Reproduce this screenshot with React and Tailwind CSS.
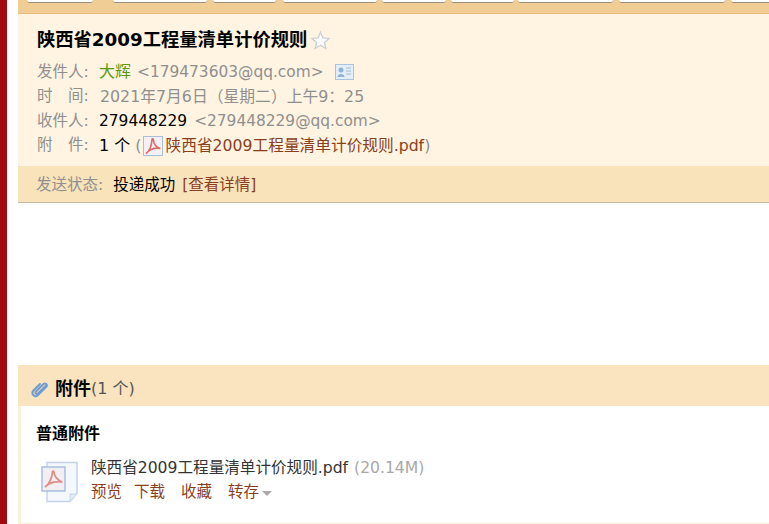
import React from 'react';

const font = { fontFamily: '"DejaVu Sans", "Noto Sans CJK SC", sans-serif' };

function PdfGlyph({ className }) {
  return (
    <svg viewBox="0 0 20 20" className={className}>
      <rect x="0.5" y="0.5" width="19" height="19" fill="#f4f1f4" stroke="#a9bedb" />
      <path d="M3 17.500C6 15.500 8.500 10 9 3.500c.2-1 1.300-1 1.400.3.200 4 2.800 7.500 7 8.700-3.500-.7-9.500-.4-14.400 5z" fill="none" stroke="#dd6a64" strokeWidth="1.600" />
    </svg>
  );
}

function BigPdfIcon() {
  return (
    <svg viewBox="0 0 38 42" className="h-[42px] w-[38px] shrink-0">
      <path d="M6 1.500h30v31l-7 8H6z" fill="#f4f8fd" stroke="#c2d3ea" strokeWidth="1.500" />
      <path d="M29 40v-7h7" fill="#e2eaf5" stroke="#c2d3ea" />
      <rect x="1" y="6" width="23" height="24" fill="#f3eef1" stroke="#a9bedb" strokeWidth="1.500" />
      <path d="M4 26C8 23.500 11 17 11.500 11c.2-1 1.300-1 1.400 0 .2 4 3.500 8.500 8.500 10-4.500-1-12.400-.5-17.400 5z" fill="none" stroke="#e08c88" strokeWidth="1.800" />
    </svg>
  );
}

const tabs = [
  'ml-[9px] w-[66px]',
  'ml-[20px] w-[94px]',
  'ml-[6px] w-[63px]',
  'ml-[7px] w-[94px]',
  'ml-[5px] w-[64px]',
  'ml-[5px] w-[63px]',
  'ml-[4px] w-[95px]',
  'ml-[6px] w-[106px]',
  'ml-[6px] w-[60px]',
];

function Row({ label, children }) {
  return (
    <div className="flex h-[24.5px] items-center whitespace-nowrap">
      <span className="w-[62px] shrink-0 text-[15.500px] text-[#8f8f8f]">{label}</span>
      {children}
    </div>
  );
}

export default function App() {
  return (
    <div className="flex h-[524px] w-[769px] overflow-hidden bg-white text-[16px] text-[#000]" style={font}>
      <div className="w-[7px] shrink-0 bg-[#a00a0f]" />
      <div className="w-[11px] shrink-0 bg-white" />
      <div className="flex min-w-0 flex-1 flex-col">
        {/* tab strip */}
        <div className="flex h-[14px] shrink-0 overflow-hidden border-b border-[#e8b97a] bg-[#efcd94]">
          {tabs.map((w, i) => (
            <div key={i} className={`${w} h-[3px] shrink-0 rounded-b-[3px] border-b border-[#97927f] bg-white`} />
          ))}
        </div>

        {/* mail header */}
        <div className="h-[152px] shrink-0 bg-[#fff4e1] pl-[19px]">
          <div className="flex h-[46px] items-center pt-[6px]">
            <span className="text-[18.300px] font-bold leading-none">陕西省2009工程量清单计价规则</span>
            <svg viewBox="0 0 24 24" className="ml-[3px] h-[21px] w-[21px]">
              <path d="M12 2.500l2.800 6.500 7 .6-5.300 4.600 1.600 6.900-6.100-3.700-6.100 3.700 1.600-6.900-5.300-4.600 7-.6z" fill="#fbfbfb" stroke="#c9ced6" strokeWidth="1.500" />
            </svg>
          </div>
          <Row label="发件人:">
            <span className="text-[#5c9a0c]">大辉</span>
            <span className="ml-[6px] text-[15.400px] text-[#8f8f8f]">&lt;179473603@qq.com&gt;</span>
            <svg viewBox="0 0 19 16" className="ml-[11px] h-[16px] w-[19px]">
              <rect x="0.500" y="0.500" width="18" height="15" fill="#e4eef8" stroke="#a8c4e0" />
              <circle cx="6" cy="6" r="2.500" fill="#8fb2d6" />
              <path d="M2.500 13c0-4 7-4 7 0z" fill="#8fb2d6" />
              <path d="M11 4h5M11 7h5M11 10h5" stroke="#9dbbd9" />
            </svg>
          </Row>
          <Row label="时　间:">
            <span className="ml-[1px] text-[15.800px] text-[#8f8f8f]">2021年7月6日（星期二）上午9：25</span>
          </Row>
          <Row label="收件人:">
            <span className="text-[15.400px]">279448229</span>
            <span className="ml-[7px] text-[15.400px] text-[#8f8f8f]">&lt;279448229@qq.com&gt;</span>
          </Row>
          <Row label="附　件:">
            <span>1 个</span>
            <span className="ml-[5px] text-[#8f8f8f]">(</span>
            <PdfGlyph className="ml-[1px] mr-[3px] h-[20px] w-[20px] shrink-0" />
            <span className="text-[15.700px] text-[#8a3f1c]">陕西省2009工程量清单计价规则.pdf</span>
            <span className="text-[#8f8f8f]">)</span>
          </Row>
        </div>

        {/* send status */}
        <div className="flex h-[37px] shrink-0 items-center whitespace-nowrap border-b border-[#c9b9a0] bg-[#f9e3bb] pl-[18px] pt-[3px] text-[15.500px]">
          <span className="text-[#8f8f8f]">发送状态:</span>
          <span className="ml-[10px]">投递成功</span>
          <span className="ml-[7px] text-[#8a3f1c]">[查看详情]</span>
        </div>

        <div className="h-[162px] shrink-0 bg-white" />

        {/* attachments */}
        <div className="flex h-[41px] shrink-0 items-center bg-[#fae4bf] pl-[13px] pt-[6px]">
          <svg viewBox="0 0 18 18" className="h-[18px] w-[18px]">
            <path d="M14.500 6L7 13.500c-1.500 1.500-3.500-.5-2-2L12 4.500c2.500-2.500 5 .5 3 2.500l-8 8c-3 3-7.500-1-4.500-4.500L9 4" fill="none" stroke="#6f9bd0" strokeWidth="2" strokeLinecap="round" />
          </svg>
          <span className="ml-[6px] text-[18px] font-bold">附件</span>
          <span className="text-[16px] text-[#555]">(1 个)</span>
        </div>
        <div className="flex-1 border-b border-l-[3px] border-[#fbf1d9] bg-white pl-[15px] pt-[16px]">
          <div className="text-[16px] font-bold leading-[24px]">普通附件</div>
          <div className="mt-[10px] flex gap-[12px] pl-[5px]">
            <div className="pt-[5px]"><BigPdfIcon /></div>
            <div className="whitespace-nowrap">
              <div className="text-[15.600px] leading-[24px]">
                <span className="text-[#333]">陕西省2009工程量清单计价规则.pdf</span>
                <span className="ml-[6px] text-[#a8a8a8]">(20.14M)</span>
              </div>
              <div className="flex items-center text-[15.500px] leading-[24px] text-[#8a3f1c]">
                <span>预览</span>
                <span className="ml-[12px]">下载</span>
                <span className="ml-[16px]">收藏</span>
                <span className="ml-[16px]">转存</span>
                <span className="ml-[3px] mt-[3px] h-0 w-0 border-x-[5px] border-t-[5px] border-x-transparent border-t-[#a9a9a9]" />
              </div>
            </div>
          </div>
        </div>
      </div>
    </div>
  );
}
